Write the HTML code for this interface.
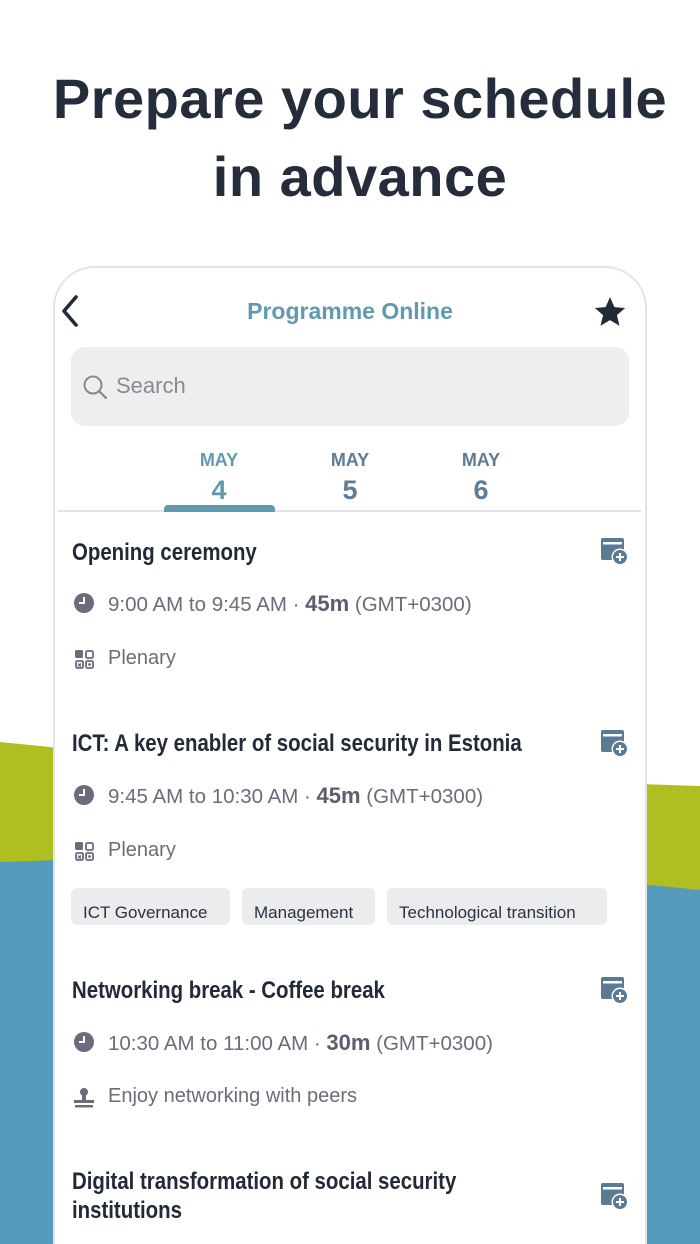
<!DOCTYPE html>
<html><head><meta charset="utf-8"><style>
*{margin:0;padding:0;box-sizing:border-box}
html,body{width:700px;height:1244px;overflow:hidden;background:#fff}
body{font-family:"Liberation Sans",sans-serif}
#w{position:relative;width:700px;height:1244px;overflow:hidden}
.h1{position:absolute;left:0;width:720px;text-align:center;font-weight:bold;font-size:56px;color:#252c3b;letter-spacing:0.5px}
.card{position:absolute;left:53px;top:266px;width:594px;height:1040px;background:#fff;border:2px solid #e4e4e6;border-radius:42px}
.abs{position:absolute}
.t{position:absolute;left:72px;font-weight:bold;font-size:24px;color:#222a37;transform:scaleX(0.85);transform-origin:left;white-space:nowrap;line-height:29px}
.time{position:absolute;left:108px;font-size:20.5px;color:#6c6b7c;white-space:nowrap}
.time b{font-size:22px;color:#5e5d70}
.meta{position:absolute;left:108px;font-size:20px;color:#6c6b7c}
.tag{position:absolute;top:888px;height:37px;background:#ebecee;border-radius:6px;font-size:17px;color:#2b3140;padding-top:15px;padding-left:12px;white-space:nowrap}
</style></head><body><div id="w">
<svg class="abs" style="left:0;top:0" width="700" height="1244">
<path d="M0 742 L60 748 L60 1244 L0 1244Z" fill="#afbe21"/>
<path d="M0 862 L60 860 L60 1244 L0 1244Z" fill="#569bbe"/>
<path d="M640 784 L700 786 L700 1244 L640 1244Z" fill="#afbe21"/>
<path d="M640 884 L700 890 L700 1244 L640 1244Z" fill="#569bbe"/>
</svg>
<div class="h1" style="top:66px">Prepare your schedule</div>
<div class="h1" style="top:144px">in advance</div>
<div class="card"></div>
<svg class="abs" style="left:58px;top:294px" width="24" height="34"><path d="M18 3 L6 17 L18 31" stroke="#222a37" stroke-width="3.6" fill="none" stroke-linecap="round" stroke-linejoin="round"/></svg>
<div class="abs" style="left:0;width:700px;top:298px;text-align:center;font-weight:bold;font-size:23px;color:#6199b1">Programme Online</div>
<svg class="abs" style="left:593px;top:295px" width="34" height="34" viewBox="0 0 24 24"><path d="M12 1.5l3.1 7.1 7.6.6-5.8 5 1.8 7.5L12 17.7l-6.7 4 1.8-7.5-5.8-5 7.6-.6z" fill="#222a37"/></svg>
<div class="abs" style="left:71px;top:347px;width:558px;height:79px;background:#eeeef0;border-radius:14px"></div>
<svg class="abs" style="left:81px;top:373px" width="28" height="28"><circle cx="12" cy="12" r="8.5" stroke="#87878c" stroke-width="2" fill="none"/><path d="M18 18 L25 25" stroke="#87878c" stroke-width="2.2" stroke-linecap="round"/></svg>
<div class="abs" style="left:116px;top:373px;font-size:22px;color:#8a8a90">Search</div>
<div class="abs" style="left:164px;width:110px;text-align:center;top:450px;font-weight:bold;font-size:18px;color:#6199b1">MAY</div>
<div class="abs" style="left:164px;width:110px;text-align:center;top:475px;font-weight:bold;font-size:27px;color:#6199b1">4</div>
<div class="abs" style="left:295px;width:110px;text-align:center;top:450px;font-weight:bold;font-size:18px;color:#5c7d97">MAY</div>
<div class="abs" style="left:295px;width:110px;text-align:center;top:475px;font-weight:bold;font-size:27px;color:#5c7d97">5</div>
<div class="abs" style="left:426px;width:110px;text-align:center;top:450px;font-weight:bold;font-size:18px;color:#5c7d97">MAY</div>
<div class="abs" style="left:426px;width:110px;text-align:center;top:475px;font-weight:bold;font-size:27px;color:#5c7d97">6</div>
<div class="abs" style="left:58px;top:510px;width:583px;height:2px;background:#e4e4e6"></div>
<div class="abs" style="left:164px;top:505px;width:111px;height:7px;background:#6199b1;border-radius:4px 4px 0 0"></div>

<svg width="0" height="0" style="position:absolute"><defs>
<g id="cal"><rect x="1" y="1" width="23" height="22" rx="2" fill="#5b7b95"/><rect x="3" y="5" width="19" height="2.5" fill="#fff"/><circle cx="20" cy="20" r="8.5" fill="#fff"/><circle cx="20" cy="20" r="7" fill="#5b7b95"/><path d="M20 16v8M16 20h8" stroke="#fff" stroke-width="2"/></g>
<g id="clk"><circle cx="11" cy="11" r="10" fill="#6b6a7e"/><path d="M11 5v6h-5" stroke="#fff" stroke-width="2" fill="none"/></g>
<g id="grid"><rect x="1" y="1" width="8" height="8" rx="1.5" fill="#6b6a7e"/><rect x="12" y="2" width="7" height="7" rx="1.5" stroke="#6b6a7e" stroke-width="1.8" fill="none"/><rect x="2" y="12" width="7" height="7" rx="1.5" stroke="#6b6a7e" stroke-width="1.8" fill="none"/><rect x="12" y="12" width="7" height="7" rx="1.5" stroke="#6b6a7e" stroke-width="1.8" fill="none"/><path d="M4 14.5l3 3M7 14.5l-3 3" stroke="#6b6a7e" stroke-width="1.3"/><circle cx="15.5" cy="15.5" r="1.4" fill="#6b6a7e"/></g>
</defs></svg>

<div class="t" style="top:538px">Opening ceremony</div>
<svg class="abs" style="left:600px;top:537px" width="30" height="30"><use href="#cal"/></svg>
<svg class="abs" style="left:73px;top:592px" width="22" height="22"><use href="#clk"/></svg>
<div class="time" style="top:591px">9:00 AM to 9:45 AM · <b>45m</b> (GMT+0300)</div>
<svg class="abs" style="left:74px;top:649px" width="21" height="21"><use href="#grid"/></svg>
<div class="meta" style="top:647px">Plenary</div>

<div class="t" style="top:729px">ICT: A key enabler of social security in Estonia</div>
<svg class="abs" style="left:600px;top:729px" width="30" height="30"><use href="#cal"/></svg>
<svg class="abs" style="left:73px;top:784px" width="22" height="22"><use href="#clk"/></svg>
<div class="time" style="top:783px">9:45 AM to 10:30 AM · <b>45m</b> (GMT+0300)</div>
<svg class="abs" style="left:74px;top:841px" width="21" height="21"><use href="#grid"/></svg>
<div class="meta" style="top:839px">Plenary</div>
<div class="tag" style="left:71px;width:159px">ICT Governance</div>
<div class="tag" style="left:242px;width:133px">Management</div>
<div class="tag" style="left:387px;width:220px">Technological transition</div>

<div class="t" style="top:976px">Networking break - Coffee break</div>
<svg class="abs" style="left:600px;top:976px" width="30" height="30"><use href="#cal"/></svg>
<svg class="abs" style="left:73px;top:1031px" width="22" height="22"><use href="#clk"/></svg>
<div class="time" style="top:1030px">10:30 AM to 11:00 AM · <b>30m</b> (GMT+0300)</div>
<svg class="abs" style="left:73px;top:1087px" width="22" height="22"><circle cx="11" cy="5" r="4" fill="#6b6a7e"/><path d="M9 8h4v5H9z" fill="#6b6a7e"/><rect x="1" y="13" width="20" height="3" fill="#6b6a7e"/><rect x="2" y="18" width="18" height="2.5" fill="#6b6a7e"/></svg>
<div class="meta" style="top:1085px">Enjoy networking with peers</div>

<div class="t" style="top:1167px">Digital transformation of social security<br>institutions</div>
<svg class="abs" style="left:600px;top:1182px" width="30" height="30"><use href="#cal"/></svg>
</div></body></html>
